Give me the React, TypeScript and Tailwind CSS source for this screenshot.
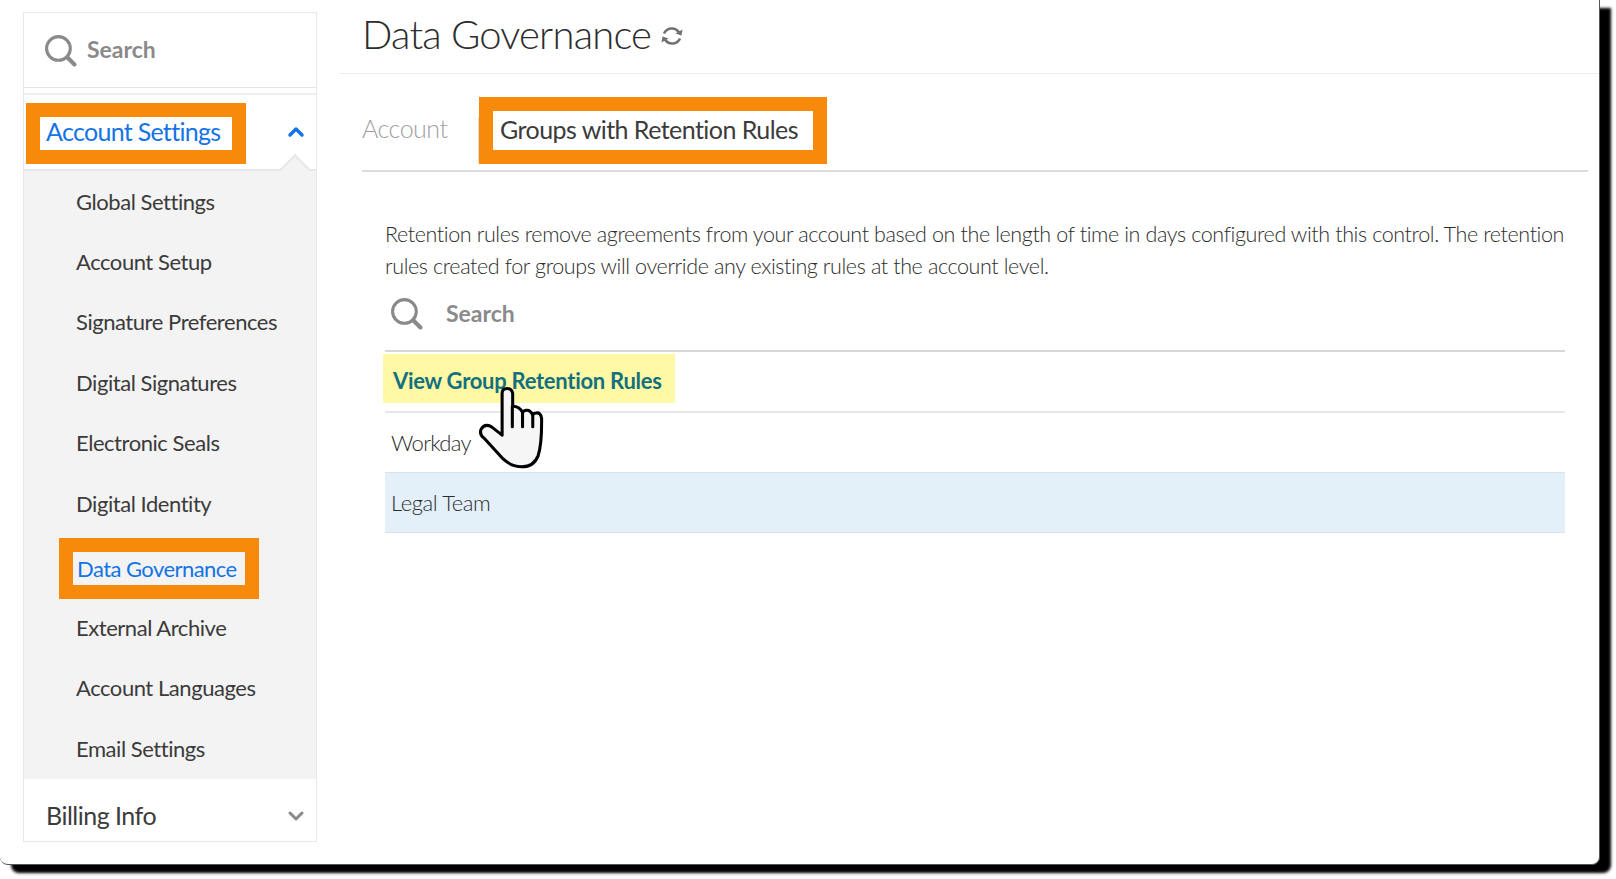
import React from 'react';
import { ChevronDown, ChevronUp } from 'lucide-react';

const subItems = [
  'Global Settings',
  'Account Setup',
  'Signature Preferences',
  'Digital Signatures',
  'Electronic Seals',
  'Digital Identity',
  'Data Governance',
  'External Archive',
  'Account Languages',
  'Email Settings',
];

function SearchIcon() {
  return (
    <svg width="33" height="33" viewBox="0 0 32 32" fill="none" stroke="#8a8a8a" strokeWidth="3" className="shrink-0">
      <circle cx="14" cy="14" r="11.5" />
      <path d="M22.5 22.5 L29.5 29.5" strokeWidth="4" strokeLinecap="round" />
    </svg>
  );
}

function RefreshIcon() {
  return (
    <svg width="24" height="24" viewBox="0 0 24 24" fill="none" stroke="#707070" strokeWidth="2.6" className="ml-[9px] mt-[4px]">
      <path d="M4 9.5 A8.5 8.5 0 0 1 19 8.5" />
      <path d="M20 14.5 A8.5 8.5 0 0 1 5 15.5" />
      <path d="M22.5 5.5 L21.5 11.5 L15.5 9.5 Z" fill="#707070" stroke="none" />
      <path d="M1.5 18.5 L2.5 12.5 L8.5 14.5 Z" fill="#707070" stroke="none" />
    </svg>
  );
}

function HandCursor() {
  return (
    <svg
      width="87"
      height="97"
      viewBox="0 0 255 285"
      className="absolute left-[84px] top-[27px]"
      fill="#f6f6f6"
      stroke="#000"
      strokeWidth="9"
      strokeLinejoin="round"
      strokeLinecap="round"
    >
      <path d="M97 42 L97 165 L65 140 Q45 130 35 148 Q29 163 45 175 L100 235 Q125 258 155 258 Q190 258 203 225 Q214 190 213 115 Q210 97 197 100 Q189 100 187 106 Q180 90 167 92 Q160 93 157 98 Q148 80 128 80 L128 42 Q125 28 112 28 Q97 28 97 42 Z" />
      <path d="M127 80 L127 140 M157 98 L157 140 M187 106 L187 140" fill="none" />
    </svg>
  );
}

function Sidebar() {
  return (
    <aside className="w-[294px] shrink-0 mt-[12px] ml-[23px] h-[830px] border border-[#e8e8e8] bg-white flex flex-col">
      <div className="h-[75px] flex items-center gap-[10px] pl-[20px] border-b border-[#e6e6e6] text-[#8a8a8a] text-[23px] font-bold">
        <SearchIcon />
        <span className="-mt-[2px]">Search</span>
      </div>
      <div className="h-[7px] border-b-2 border-[#efefef]" />
      <div className="relative h-[76px] pt-[8px] pl-[2px] flex items-start justify-between border-b-2 border-[#e8e8e8]">
        <div className="border-[14px] border-[#f88a0b] bg-white w-[220px] h-[61px] flex items-center pl-[6px] pb-[4px] text-[25px] tracking-[-0.7px] text-[#1473e6] whitespace-nowrap">
          Account Settings
        </div>
        <ChevronUp size={24} strokeWidth={3.5} className="text-[#1473e6] mr-[8px] mt-[17px]" />
        <div className="absolute right-[4px] -bottom-[2px] w-[34px] h-[17px] overflow-hidden">
          <div className="w-[24px] h-[24px] mx-auto mt-[5px] rotate-45 bg-[#f3f3f3] border-t-2 border-l-2 border-[#e8e8e8]" />
        </div>
      </div>
      <nav className="flex-1 bg-[#f3f3f3] flex flex-col">
        {subItems.map((item) =>
          item === 'Data Governance' ? (
            <div key={item} className="h-[61px] mt-[5px] -mb-[2px] pl-[35px] flex items-center">
              <div className="border-[14px] border-[#f88a0b] w-[200px] h-[61px] flex items-center pl-[4px] text-[#1473e6] text-[22px] tracking-[-0.55px] whitespace-nowrap">
                {item}
              </div>
            </div>
          ) : (
            <div key={item} className="h-[60.4px] pl-[52px] flex items-center text-[22px] tracking-[-0.45px] text-[#3b3b3b] whitespace-nowrap">
              {item}
            </div>
          )
        )}
      </nav>
      <div className="h-[62px] flex items-center justify-between pl-[22px] pr-[8px] pt-[12px] text-[25px] tracking-[-0.5px] text-[#3b3b3b]">
        <span>Billing Info</span>
        <ChevronDown size={24} strokeWidth={3} className="text-[#8a8a8a]" />
      </div>
    </aside>
  );
}

function Main() {
  return (
    <main className="flex-1 min-w-0 ml-[22px]">
      <div className="h-[74px] border-b border-[#eeeeee] pl-[23px] pb-[6px] flex items-center">
        <h1 className="text-[40px] font-light tracking-[-0.8px] text-[#2c2c2c] leading-none">Data Governance</h1>
        <RefreshIcon />
      </div>
      <div className="ml-[23px] mr-[11px] h-[98px] border-b-2 border-[#dddddd] flex items-end">
        <div className="w-[116px] h-[75px] pb-[8px] flex items-center text-[25px] tracking-[-0.5px] font-light text-[#a0a0a0]">
          Account
        </div>
        <div className="border-l border-[#dddddd] h-[46px] mb-[7px]" />
        <div className="border-[14px] border-[#f88a0b] h-[67px] w-[348px] mb-[6px] flex items-center pl-[7px] pb-[1px] text-[25px] tracking-[-0.55px] text-[#3b3b3b] whitespace-nowrap bg-white">
          Groups with Retention Rules
        </div>
      </div>
      <div className="ml-[46px] mr-[34px]">
        <p className="mt-[46px] text-[21.5px] tracking-[-0.39px] leading-[32px] font-light text-[#2c2c2c]">
          Retention rules remove agreements from your account based on the length of time in days configured with this
          control. The retention rules created for groups will override any existing rules at the account level.
        </p>
        <div className="h-[70px] pb-[6px] flex items-center gap-[23px] pl-[5px] text-[23px] font-bold text-[#8a8a8a] border-b-2 border-[#d8d8d8]">
          <SearchIcon />
          <span>Search</span>
        </div>
        <div className="relative h-[61px] border-b-2 border-[#e8e8e8]">
          <div className="absolute -left-[2px] top-[2px] w-[292px] h-[49px] bg-[#fff9a5] flex items-center pl-[10px] pt-[3px] text-[22px] tracking-[-0.28px] font-bold text-[#14707e] whitespace-nowrap">
            View Group Retention Rules
          </div>
          <HandCursor />
        </div>
        <div className="h-[59px] flex items-center pl-[6px] text-[22px] tracking-[-0.7px] font-light text-[#2c2c2c]">Workday</div>
        <div className="h-[61px] flex items-center pl-[6px] text-[22px] tracking-[-0.4px] font-light text-[#2c2c2c] bg-[#e3f0fa] border-y border-[#d8e2ea]">
          Legal Team
        </div>
      </div>
    </main>
  );
}

export default function App() {
  return (
    <div className="w-[1616px] h-[879px] bg-white overflow-hidden font-['Lato','Noto_Sans',sans-serif]">
      <div className="w-[1600px] h-[865px] bg-white border-r border-b border-[#555555] rounded-b-[8px] shadow-[11px_8px_3px_#000] flex">
        <Sidebar />
        <Main />
      </div>
    </div>
  );
}
